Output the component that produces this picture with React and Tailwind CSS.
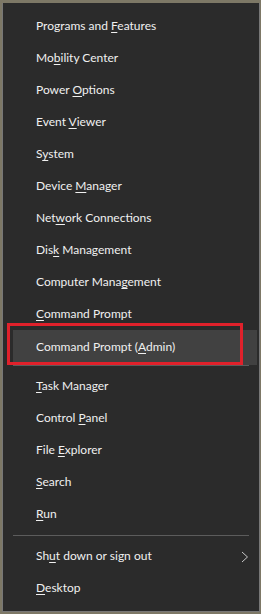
import React from "react";

/*
  Menú Win+X (tema oscuro) con la opción "Command Prompt (Admin)" resaltada.
*/

function Item({ pre, k, post, active, arrow }) {
  const box = active
    ? "h-[35px] ml-[10px] mr-[2px] pl-[23px] pb-[2px] bg-[#414141]"
    : "h-[32px] pl-[33px]";
  return (
    <div className={`relative flex items-center text-[12px] text-[#f0f0f0] ${box}`}>
      <span>
        {pre}
        <u className="underline-offset-[2px]">{k}</u>
        {post}
      </span>
      {arrow && (
        <svg className="absolute right-[10px] top-[11px]" width="8" height="12" viewBox="0 0 8 12">
          <polyline points="1,1 6.5,6 1,11" fill="none" stroke="#c8c8c8" strokeWidth="1" />
        </svg>
      )}
    </div>
  );
}

function Sep() {
  return <div className="mx-[10px] h-px bg-[#5c5c5c]" />;
}

export default function App() {
  return (
    <div
      className="w-[261px] h-[614px] bg-[#7d7866] pt-[3px] pl-[2px] overflow-hidden"
      style={{ fontFamily: 'Lato, "Noto Sans", sans-serif' }}
    >
      <div className="relative w-[258px] h-[609px] bg-[#2b2b2b] border-l border-r border-b border-[#777777] pt-[7px]">
        <Item pre="Programs and " k="F" post="eatures" />
        <Item pre="Mo" k="b" post="ility Center" />
        <Item pre="Power " k="O" post="ptions" />
        <Item pre="Event " k="V" post="iewer" />
        <Item pre="S" k="y" post="stem" />
        <Item pre="Device " k="M" post="anager" />
        <Item pre="Net" k="w" post="ork Connections" />
        <Item pre="Dis" k="k" post=" Management" />
        <Item pre="Computer Mana" k="g" post="ement" />
        <Item pre="" k="C" post="ommand Prompt" />
        <Item pre="Command Prompt (" k="A" post="dmin)" active />
        <Sep />
        <div className="h-[4px]" />
        <Item pre="" k="T" post="ask Manager" />
        <Item pre="Control " k="P" post="anel" />
        <Item pre="File " k="E" post="xplorer" />
        <Item pre="" k="S" post="earch" />
        <Item pre="" k="R" post="un" />
        <div className="h-[5px]" />
        <Sep />
        <div className="h-[4px]" />
        <Item pre="Sh" k="u" post="t down or sign out" arrow />
        <Item pre="" k="D" post="esktop" />

        {/* recuadro rojo de anotación */}
        <div className="absolute left-[4px] top-[320px] w-[236px] h-[42px] border-[3px] border-[#e0212b]" />
      </div>
    </div>
  );
}
